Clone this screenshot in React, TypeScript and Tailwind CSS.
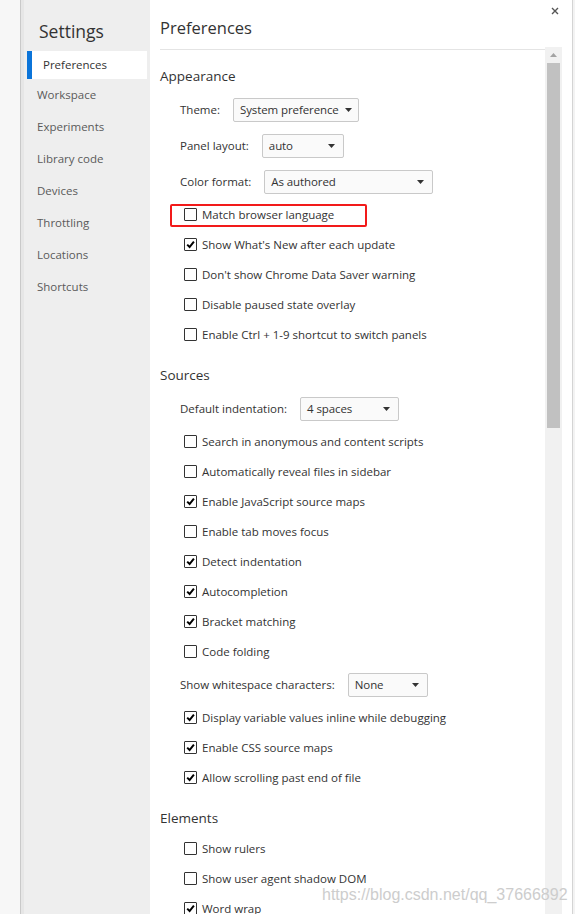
import React from "react";

function Check({ checked }: { checked?: boolean }) {
  return (
    <span className="w-[13px] h-[13px] border border-[#333333] rounded-[1px] bg-white flex items-center justify-center shrink-0">
      {checked && (
        <svg width="9" height="9" viewBox="0 0 9 9">
          <path d="M1.2 4.6 L3.6 7 L7.9 1.6" stroke="#000" strokeWidth="2" fill="none" />
        </svg>
      )}
    </span>
  );
}

function CheckRow({ label, checked, highlight }: { label: string; checked?: boolean; highlight?: boolean }) {
  return (
    <div className="relative h-[30px] flex items-center pl-[24px] gap-[5px]">
      <Check checked={checked} />
      <span className="text-[11.5px] text-[#333333] whitespace-nowrap">{label}</span>
      {highlight && (
        <div className="absolute left-[10px] top-[4px] w-[197px] h-[23px] border-2 border-[#f21a1a] rounded-[2px]" />
      )}
    </div>
  );
}

function SelectRow({ label, value, boxClass }: { label: string; value: string; boxClass: string }) {
  return (
    <div className="h-[36px] flex items-center pl-[20px]">
      <span className="text-[11.5px] text-[#333333] mr-[13px] whitespace-nowrap">{label}</span>
      <div className={"h-[24px] border border-[#c9c9c9] rounded-[2px] bg-[#fafafa] flex items-center justify-between gap-[6px] pl-[6px] pr-[8px] " + boxClass}>
        <span className="text-[11.5px] tracking-[-0.1px] text-[#333333] whitespace-nowrap">{value}</span>
        <svg className="shrink-0" width="7" height="4" viewBox="0 0 7 4">
          <path d="M0 0 L7 0 L3.5 4 Z" fill="#333" />
        </svg>
      </div>
    </div>
  );
}

function SectionTitle({ title, first }: { title: string; first?: boolean }) {
  return (
    <div className={"h-[30px] flex items-center text-[13.5px] text-[#333333] " + (first ? "" : "mt-[11px]")}>{title}</div>
  );
}

export default function App() {
  const side = ["Workspace", "Experiments", "Library code", "Devices", "Throttling", "Locations", "Shortcuts"];
  return (
    <div className="w-[575px] h-[914px] overflow-hidden flex font-['Open_Sans',sans-serif] bg-white">
      <div className="w-[20px] bg-[#f7f7f7]" />
      <div className="w-[1px] bg-[#c9c9c9]" />
      <div className="w-[3px] bg-[#e6e6e6]" />
      <div className="w-[126px] bg-[#eeeeee] flex flex-col">
        <div className="h-[51px] flex items-center pl-[15px] pt-[12px] text-[17.5px] text-[#333333]">Settings</div>
        <div className="mx-[3px] h-[28px] bg-white border-l-[5px] border-[#0b74d9] flex items-center pl-[11px] text-[11.5px] text-[#333333]">
          Preferences
        </div>
        {side.map((s) => (
          <div key={s} className="h-[32px] flex items-center pl-[13px] text-[11.5px] text-[#5a5a5a]">
            {s}
          </div>
        ))}
      </div>
      <div className="flex-1 flex relative bg-white">
        <div className="flex-1 pl-[10px] flex flex-col">
          <div className="h-[50px] shrink-0 flex items-center pt-[7px] border-b border-[#e4e4e4] text-[16.5px] text-[#333333]">
            Preferences
          </div>
          <div className="pt-[11.5px] flex flex-col">
            <SectionTitle title="Appearance" first />
            <SelectRow label="Theme:" value="System preference" boxClass="w-[126px]" />
            <SelectRow label="Panel layout:" value="auto" boxClass="w-[82px]" />
            <SelectRow label="Color format:" value="As authored" boxClass="w-[169px]" />
            <CheckRow label="Match browser language" highlight />
            <CheckRow label="Show What's New after each update" checked />
            <CheckRow label="Don't show Chrome Data Saver warning" />
            <CheckRow label="Disable paused state overlay" />
            <CheckRow label="Enable Ctrl + 1-9 shortcut to switch panels" />
            <SectionTitle title="Sources" />
            <SelectRow label="Default indentation:" value="4 spaces" boxClass="w-[99px]" />
            <CheckRow label="Search in anonymous and content scripts" />
            <CheckRow label="Automatically reveal files in sidebar" />
            <CheckRow label="Enable JavaScript source maps" checked />
            <CheckRow label="Enable tab moves focus" />
            <CheckRow label="Detect indentation" checked />
            <CheckRow label="Autocompletion" checked />
            <CheckRow label="Bracket matching" checked />
            <CheckRow label="Code folding" />
            <SelectRow label="Show whitespace characters:" value="None" boxClass="w-[80px]" />
            <CheckRow label="Display variable values inline while debugging" checked />
            <CheckRow label="Enable CSS source maps" checked />
            <CheckRow label="Allow scrolling past end of file" checked />
            <SectionTitle title="Elements" />
            <CheckRow label="Show rulers" />
            <CheckRow label="Show user agent shadow DOM" />
            <CheckRow label="Word wrap" checked />
          </div>
        </div>
        <div className="w-[17px] flex flex-col pt-[47px]">
          <div className="flex-1 bg-[#f1f1f1] flex flex-col items-center">
            <div className="h-[16px] flex items-center justify-center">
              <svg width="7" height="4" viewBox="0 0 7 4">
                <path d="M0 4 L7 4 L3.5 0 Z" fill="#a3a3a3" />
              </svg>
            </div>
            <div className="w-[13px] h-[365px] bg-[#c1c1c1]" />
          </div>
        </div>
        <div className="w-[10px] bg-white" />
        <div className="w-[1px] bg-[#d4d4d4]" />
        <div className="w-[2px] bg-[#f3f3f3]" />
        <button className="absolute right-[15px] top-[6px] w-[10px] h-[10px] flex items-center justify-center">
          <svg width="8" height="8" viewBox="0 0 8 8">
            <path d="M1 1 L7 7 M7 1 L1 7" stroke="#555" strokeWidth="1.4" />
          </svg>
        </button>
        <div className="absolute left-[172px] top-[884px] text-[16px] leading-[21px] text-[#cdcdcd] font-['Liberation_Sans',sans-serif] whitespace-nowrap">
          https://blog.csdn.net/qq_37666892
        </div>
      </div>
    </div>
  );
}
